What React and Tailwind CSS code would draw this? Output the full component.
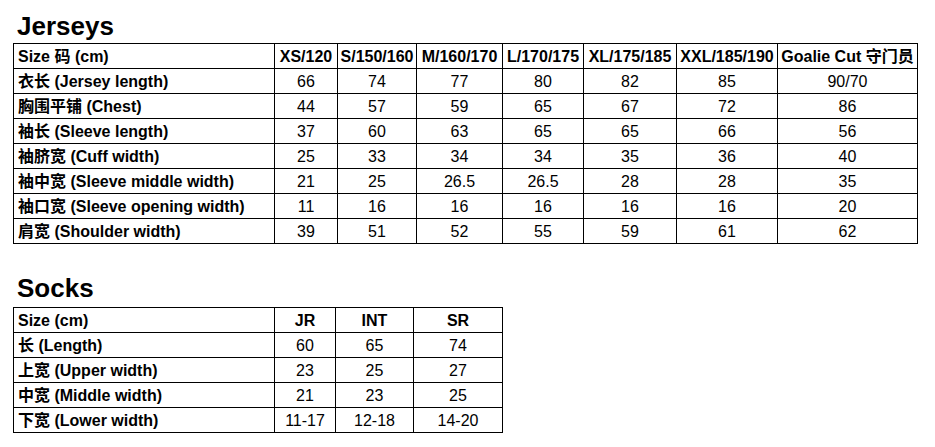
import React from "react";

const font = { fontFamily: '"Liberation Sans", Arial, "Noto Sans CJK SC", sans-serif' };

const jerseyHead = ["Size 码 (cm)", "XS/120", "S/150/160", "M/160/170", "L/170/175", "XL/175/185", "XXL/185/190", "Goalie Cut 守门员"];
const jerseyRows = [
  ["衣长 (Jersey length)", "66", "74", "77", "80", "82", "85", "90/70"],
  ["胸围平铺 (Chest)", "44", "57", "59", "65", "67", "72", "86"],
  ["袖长 (Sleeve length)", "37", "60", "63", "65", "65", "66", "56"],
  ["袖脐宽 (Cuff width)", "25", "33", "34", "34", "35", "36", "40"],
  ["袖中宽 (Sleeve middle width)", "21", "25", "26.5", "26.5", "28", "28", "35"],
  ["袖口宽 (Sleeve opening width)", "11", "16", "16", "16", "16", "16", "20"],
  ["肩宽 (Shoulder width)", "39", "51", "52", "55", "59", "61", "62"],
];

const sockHead = ["Size (cm)", "JR", "INT", "SR"];
const sockRows = [
  ["长 (Length)", "60", "65", "74"],
  ["上宽 (Upper width)", "23", "25", "27"],
  ["中宽 (Middle width)", "21", "23", "25"],
  ["下宽 (Lower width)", "11-17", "12-18", "14-20"],
];

function Grid({ head, rows, cols, width }) {
  return (
    <div
      className={`ml-[13px] grid gap-px border border-black bg-black text-[16px] leading-[25px] text-black ${width} ${cols}`}
    >
      {head.map((h, i) => (
        <div
          key={"h" + i}
          className={`h-[24px] overflow-visible bg-white font-bold whitespace-nowrap ${i === 0 ? "pl-[4px] text-left" : "text-center"}`}
        >
          {h}
        </div>
      ))}
      {rows.map((r, ri) =>
        r.map((c, i) => (
          <div
            key={ri + "-" + i}
            className={`h-[24px] overflow-visible bg-white whitespace-nowrap ${i === 0 ? "pl-[4px] text-left font-bold" : "text-center"}`}
          >
            {c}
          </div>
        ))
      )}
    </div>
  );
}

export default function App() {
  return (
    <div className="h-[447px] w-[935px] overflow-hidden bg-white" style={font}>
      <div className="pl-[17px] pt-[11px] text-[26px] font-bold leading-[30px] text-black">Jerseys</div>
      <div className="mt-[2px]">
        <Grid
          head={jerseyHead}
          rows={jerseyRows}
          width="w-[905px]"
          cols="grid-cols-[260px_62px_78px_85px_80px_92px_100px_139px]"
        />
      </div>
      <div className="mt-[29px] pl-[17px] text-[26px] font-bold leading-[30px] text-black">Socks</div>
      <div className="mt-[4px]">
        <Grid
          head={sockHead}
          rows={sockRows}
          width="w-[490px]"
          cols="grid-cols-[260px_60px_77px_88px]"
        />
      </div>
    </div>
  );
}
